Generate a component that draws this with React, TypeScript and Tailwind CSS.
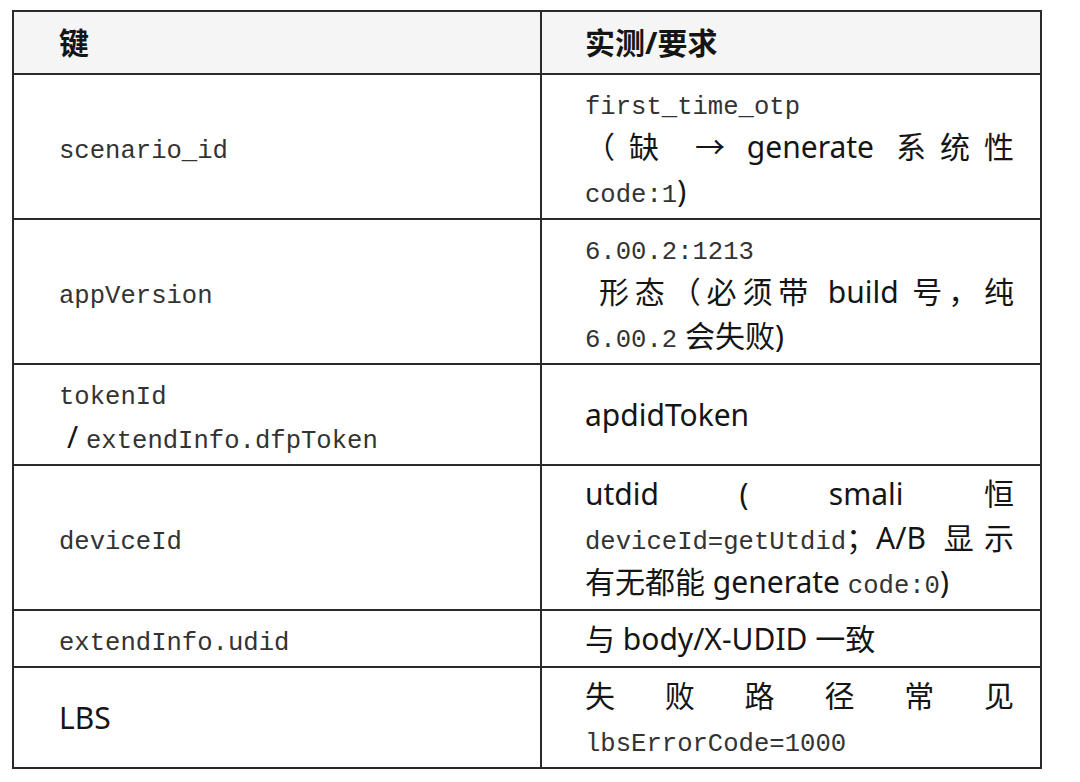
import React from 'react';

const Code = ({ children }: { children: React.ReactNode }) => (
  <span className="font-[family-name:Liberation_Mono,monospace] text-[25.6px] leading-none text-[#333]">
    {children}
  </span>
);

// one rendered line; justified lines spread to the full width like the source doc
const Line = ({
  children,
  justify,
  className,
}: {
  children: React.ReactNode;
  justify?: boolean;
  className?: string;
}) => (
  <div
    className={
      (justify ? 'text-justify [text-align-last:justify] ' : '') +
      (className || '')
    }
  >
    {children}
  </div>
);

const rows: { key: React.ReactNode; value: React.ReactNode }[] = [
  {
    key: (
      <Line>
        <Code>scenario_id</Code>
      </Line>
    ),
    value: (
      <>
        <Line>
          <Code>first_time_otp</Code>
        </Line>
        <Line justify>（缺 → generate 系统性</Line>
        <Line>
          <Code>code:1</Code>)
        </Line>
      </>
    ),
  },
  {
    key: (
      <Line>
        <Code>appVersion</Code>
      </Line>
    ),
    value: (
      <>
        <Line>
          <Code>6.00.2:1213</Code>
        </Line>
        <Line justify className="pl-[14px]">
          形态（必须带 build 号，纯
        </Line>
        <Line>
          <Code>6.00.2</Code> 会失败)
        </Line>
      </>
    ),
  },
  {
    key: (
      <>
        <Line>
          <Code>tokenId</Code>
        </Line>
        <Line className="pl-[8px]">
          / <Code>extendInfo.dfpToken</Code>
        </Line>
      </>
    ),
    value: <Line>apdidToken</Line>,
  },
  {
    key: (
      <Line>
        <Code>deviceId</Code>
      </Line>
    ),
    value: (
      <>
        <Line justify>utdid ( smali 恒</Line>
        <Line justify>
          <Code>deviceId=getUtdid</Code>；A/B 显示
        </Line>
        <Line>
          有无都能 generate <Code>code:0</Code>)
        </Line>
      </>
    ),
  },
  {
    key: (
      <Line>
        <Code>extendInfo.udid</Code>
      </Line>
    ),
    value: <Line>与 body/X-UDID 一致</Line>,
  },
  {
    key: <Line>LBS</Line>,
    value: (
      <>
        <Line justify>失败路径常见</Line>
        <Line>
          <Code>lbsErrorCode=1000</Code>
        </Line>
      </>
    ),
  },
];

const App = () => {
  return (
    <div className="h-[782px] w-[1080px] bg-white pl-[12px] pt-[10px] font-[family-name:Noto_Sans,Noto_Sans_CJK_SC,sans-serif] text-[30px] leading-[44px] text-[#151515]">
      <div className="w-[1030px] border-2 border-[#2a2a2a]">
        <div className="grid grid-cols-[528px_1fr] border-b-2 border-[#2a2a2a] bg-[#f5f5f5] font-bold">
          <div className="flex h-[61px] items-center border-r-2 border-[#2a2a2a] pl-[45px]">
            键
          </div>
          <div className="flex h-[61px] items-center pl-[43px]">实测/要求</div>
        </div>
        {rows.map((row, i) => {
          return (
            <div
              key={i}
              className={
                'grid grid-cols-[528px_1fr] ' +
                (i < rows.length - 1 ? 'border-b-2 border-[#2a2a2a]' : '')
              }
            >
              <div className="flex flex-col justify-center border-r-2 border-[#2a2a2a] py-[5.5px] pl-[45px]">
                {row.key}
              </div>
              <div className="flex flex-col justify-center py-[5.5px] pl-[43px] pr-[26px]">
                {row.value}
              </div>
            </div>
          );
        })}
      </div>
    </div>
  );
};

export default App;
